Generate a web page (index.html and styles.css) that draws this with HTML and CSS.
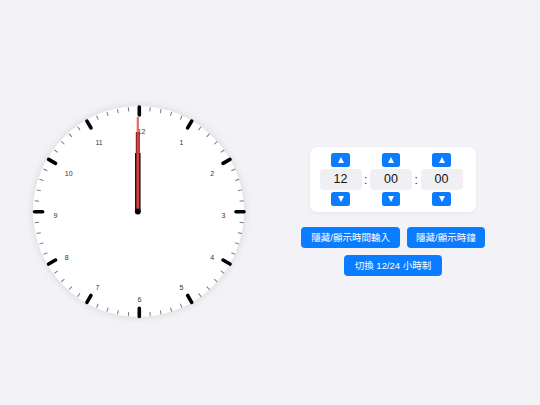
FILE: index.html
```html
<!DOCTYPE html>
<html lang="zh-Hant">
<head>
<meta charset="utf-8">
<title>時鐘</title>
<link rel="stylesheet" href="styles.css">
</head>
<body>
<main class="page">
  <div class="clock">
    <svg class="face" viewBox="0 0 211 211" width="211" height="211">
      <g class="minor">
        <line x1="106.3" y1="0.7" x2="106.3" y2="4.9" transform="rotate(6 106.3 105.7)"/>
        <line x1="106.3" y1="0.7" x2="106.3" y2="4.9" transform="rotate(12 106.3 105.7)"/>
        <line x1="106.3" y1="0.7" x2="106.3" y2="4.9" transform="rotate(18 106.3 105.7)"/>
        <line x1="106.3" y1="0.7" x2="106.3" y2="4.9" transform="rotate(24 106.3 105.7)"/>
        <line x1="106.3" y1="0.7" x2="106.3" y2="4.9" transform="rotate(36 106.3 105.7)"/>
        <line x1="106.3" y1="0.7" x2="106.3" y2="4.9" transform="rotate(42 106.3 105.7)"/>
        <line x1="106.3" y1="0.7" x2="106.3" y2="4.9" transform="rotate(48 106.3 105.7)"/>
        <line x1="106.3" y1="0.7" x2="106.3" y2="4.9" transform="rotate(54 106.3 105.7)"/>
        <line x1="106.3" y1="0.7" x2="106.3" y2="4.9" transform="rotate(66 106.3 105.7)"/>
        <line x1="106.3" y1="0.7" x2="106.3" y2="4.9" transform="rotate(72 106.3 105.7)"/>
        <line x1="106.3" y1="0.7" x2="106.3" y2="4.9" transform="rotate(78 106.3 105.7)"/>
        <line x1="106.3" y1="0.7" x2="106.3" y2="4.9" transform="rotate(84 106.3 105.7)"/>
        <line x1="106.3" y1="0.7" x2="106.3" y2="4.9" transform="rotate(96 106.3 105.7)"/>
        <line x1="106.3" y1="0.7" x2="106.3" y2="4.9" transform="rotate(102 106.3 105.7)"/>
        <line x1="106.3" y1="0.7" x2="106.3" y2="4.9" transform="rotate(108 106.3 105.7)"/>
        <line x1="106.3" y1="0.7" x2="106.3" y2="4.9" transform="rotate(114 106.3 105.7)"/>
        <line x1="106.3" y1="0.7" x2="106.3" y2="4.9" transform="rotate(126 106.3 105.7)"/>
        <line x1="106.3" y1="0.7" x2="106.3" y2="4.9" transform="rotate(132 106.3 105.7)"/>
        <line x1="106.3" y1="0.7" x2="106.3" y2="4.9" transform="rotate(138 106.3 105.7)"/>
        <line x1="106.3" y1="0.7" x2="106.3" y2="4.9" transform="rotate(144 106.3 105.7)"/>
        <line x1="106.3" y1="0.7" x2="106.3" y2="4.9" transform="rotate(156 106.3 105.7)"/>
        <line x1="106.3" y1="0.7" x2="106.3" y2="4.9" transform="rotate(162 106.3 105.7)"/>
        <line x1="106.3" y1="0.7" x2="106.3" y2="4.9" transform="rotate(168 106.3 105.7)"/>
        <line x1="106.3" y1="0.7" x2="106.3" y2="4.9" transform="rotate(174 106.3 105.7)"/>
        <line x1="106.3" y1="0.7" x2="106.3" y2="4.9" transform="rotate(186 106.3 105.7)"/>
        <line x1="106.3" y1="0.7" x2="106.3" y2="4.9" transform="rotate(192 106.3 105.7)"/>
        <line x1="106.3" y1="0.7" x2="106.3" y2="4.9" transform="rotate(198 106.3 105.7)"/>
        <line x1="106.3" y1="0.7" x2="106.3" y2="4.9" transform="rotate(204 106.3 105.7)"/>
        <line x1="106.3" y1="0.7" x2="106.3" y2="4.9" transform="rotate(216 106.3 105.7)"/>
        <line x1="106.3" y1="0.7" x2="106.3" y2="4.9" transform="rotate(222 106.3 105.7)"/>
        <line x1="106.3" y1="0.7" x2="106.3" y2="4.9" transform="rotate(228 106.3 105.7)"/>
        <line x1="106.3" y1="0.7" x2="106.3" y2="4.9" transform="rotate(234 106.3 105.7)"/>
        <line x1="106.3" y1="0.7" x2="106.3" y2="4.9" transform="rotate(246 106.3 105.7)"/>
        <line x1="106.3" y1="0.7" x2="106.3" y2="4.9" transform="rotate(252 106.3 105.7)"/>
        <line x1="106.3" y1="0.7" x2="106.3" y2="4.9" transform="rotate(258 106.3 105.7)"/>
        <line x1="106.3" y1="0.7" x2="106.3" y2="4.9" transform="rotate(264 106.3 105.7)"/>
        <line x1="106.3" y1="0.7" x2="106.3" y2="4.9" transform="rotate(276 106.3 105.7)"/>
        <line x1="106.3" y1="0.7" x2="106.3" y2="4.9" transform="rotate(282 106.3 105.7)"/>
        <line x1="106.3" y1="0.7" x2="106.3" y2="4.9" transform="rotate(288 106.3 105.7)"/>
        <line x1="106.3" y1="0.7" x2="106.3" y2="4.9" transform="rotate(294 106.3 105.7)"/>
        <line x1="106.3" y1="0.7" x2="106.3" y2="4.9" transform="rotate(306 106.3 105.7)"/>
        <line x1="106.3" y1="0.7" x2="106.3" y2="4.9" transform="rotate(312 106.3 105.7)"/>
        <line x1="106.3" y1="0.7" x2="106.3" y2="4.9" transform="rotate(318 106.3 105.7)"/>
        <line x1="106.3" y1="0.7" x2="106.3" y2="4.9" transform="rotate(324 106.3 105.7)"/>
        <line x1="106.3" y1="0.7" x2="106.3" y2="4.9" transform="rotate(336 106.3 105.7)"/>
        <line x1="106.3" y1="0.7" x2="106.3" y2="4.9" transform="rotate(342 106.3 105.7)"/>
        <line x1="106.3" y1="0.7" x2="106.3" y2="4.9" transform="rotate(348 106.3 105.7)"/>
        <line x1="106.3" y1="0.7" x2="106.3" y2="4.9" transform="rotate(354 106.3 105.7)"/>
      </g>
      <g class="major">
        <line x1="106.3" y1="1" x2="106.3" y2="9" transform="rotate(0 106.3 105.7)"/>
        <line x1="106.3" y1="1" x2="106.3" y2="9" transform="rotate(30 106.3 105.7)"/>
        <line x1="106.3" y1="1" x2="106.3" y2="9" transform="rotate(60 106.3 105.7)"/>
        <line x1="106.3" y1="1" x2="106.3" y2="9" transform="rotate(90 106.3 105.7)"/>
        <line x1="106.3" y1="1" x2="106.3" y2="9" transform="rotate(120 106.3 105.7)"/>
        <line x1="106.3" y1="1" x2="106.3" y2="9" transform="rotate(150 106.3 105.7)"/>
        <line x1="106.3" y1="1" x2="106.3" y2="9" transform="rotate(180 106.3 105.7)"/>
        <line x1="106.3" y1="1" x2="106.3" y2="9" transform="rotate(210 106.3 105.7)"/>
        <line x1="106.3" y1="1" x2="106.3" y2="9" transform="rotate(240 106.3 105.7)"/>
        <line x1="106.3" y1="1" x2="106.3" y2="9" transform="rotate(270 106.3 105.7)"/>
        <line x1="106.3" y1="1" x2="106.3" y2="9" transform="rotate(300 106.3 105.7)"/>
        <line x1="106.3" y1="1" x2="106.3" y2="9" transform="rotate(330 106.3 105.7)"/>
      </g>
      <g class="nums">
        <text x="146.5" y="38.8">1</text>
        <text x="177.2" y="69.5">2</text>
        <text x="188.5" y="111.5">3</text>
        <text x="177.2" y="153.5">4</text>
        <text x="146.5" y="184.2">5</text>
        <text x="104.5" y="195.5">6</text>
        <text x="62.5" y="184.2">7</text>
        <text x="31.8" y="153.5">8</text>
        <text x="20.5" y="111.5">9</text>
        <text x="31.8" y="69.5">10</text>
        <text x="62.5" y="38.8">11</text>
        <text x="104.5" y="27.5">12</text>
      </g>
      <line class="hand-hour" x1="104.8" y1="105.5" x2="104.8" y2="47"/>
      <line class="hand-minute" x1="104.8" y1="105.5" x2="104.8" y2="26"/>
      <line class="hand-second" x1="104.8" y1="105.5" x2="104.8" y2="11"/>
      <circle class="pivot" cx="104.8" cy="105.5" r="3"/>
    </svg>
  </div>

  <div class="panel">
    <div class="card">
      <div class="unit">
        <button class="step"><span class="tri-up"></span></button>
        <div class="field">12</div>
        <button class="step"><span class="tri-down"></span></button>
      </div>
      <span class="colon">:</span>
      <div class="unit">
        <button class="step"><span class="tri-up"></span></button>
        <div class="field">00</div>
        <button class="step"><span class="tri-down"></span></button>
      </div>
      <span class="colon">:</span>
      <div class="unit">
        <button class="step"><span class="tri-up"></span></button>
        <div class="field">00</div>
        <button class="step"><span class="tri-down"></span></button>
      </div>
    </div>
    <div class="actions">
      <div class="row">
        <button class="btn btn-wide">隱藏/顯示時間輸入</button>
        <button class="btn">隱藏/顯示時鐘</button>
      </div>
      <div class="row">
        <button class="btn btn-mode">切換 12/24 小時制</button>
      </div>
    </div>
  </div>
</main>
</body>
</html>
```

FILE: styles.css
```css
* { box-sizing: border-box; }

html, body {
  margin: 0;
  padding: 0;
  background: #f2f2f7;
  font-family: "Liberation Sans", "Noto Sans CJK TC", sans-serif;
}

.page {
  height: 405px;
  padding: 18px 0 0 33px;
  display: flex;
  align-items: center;
  gap: 57px;
}

.clock {
  width: 211px;
  height: 211px;
  border-radius: 50%;
  background: #ffffff;
  box-shadow: 0 0 8px rgba(0, 0, 0, 0.12);
  flex: none;
}

.face {
  display: block;
  overflow: visible;
}

.minor line {
  stroke: #7a7a7a;
  stroke-width: 1;
}

.major line {
  stroke: #000000;
  stroke-width: 3.6;
  stroke-linecap: round;
}

.nums text {
  font-family: "Liberation Sans", sans-serif;
  font-size: 7px;
  fill: #333333;
}

.hand-hour {
  stroke: #000000;
  stroke-width: 5.5;
}

.hand-minute {
  stroke: #7a1616;
  stroke-width: 4;
}

.hand-second {
  stroke: #e25050;
  stroke-opacity: 0.85;
  stroke-width: 2.2;
}

.pivot {
  fill: #000000;
}

.panel {
  width: 184px;
  display: flex;
  flex-direction: column;
  align-items: center;
  gap: 15px;
}

.card {
  width: 166px;
  background: #ffffff;
  border-radius: 7px;
  box-shadow: 0 1px 4px rgba(0, 0, 0, 0.06);
  padding: 6px 13px 6px 9.5px;
  display: flex;
  align-items: center;
}

.unit {
  width: 42px;
  display: flex;
  flex-direction: column;
  align-items: center;
  gap: 1.5px;
}

.step {
  width: 18.5px;
  height: 14.5px;
  border: none;
  border-radius: 2.5px;
  background: #0a7cff;
  padding: 0;
  display: flex;
  align-items: center;
  justify-content: center;
}

.tri-up {
  width: 0;
  height: 0;
  border-left: 3.5px solid transparent;
  border-right: 3.5px solid transparent;
  border-bottom: 6px solid #ffffff;
}

.tri-down {
  width: 0;
  height: 0;
  border-left: 3.5px solid transparent;
  border-right: 3.5px solid transparent;
  border-top: 6px solid #ffffff;
}

.field {
  width: 42px;
  height: 21.5px;
  border-radius: 4px;
  background: #f0f0f4;
  font-size: 12.5px;
  line-height: 21.5px;
  text-align: center;
  color: #111111;
}

.colon {
  width: 8.5px;
  text-align: center;
  font-size: 12px;
  color: #333333;
}

.actions {
  display: flex;
  flex-direction: column;
  align-items: center;
  gap: 7px;
}

.row {
  display: flex;
  gap: 7px;
}

.btn {
  height: 21px;
  border: none;
  border-radius: 4px;
  background: #0a7cff;
  color: #ffffff;
  font-family: "Liberation Sans", "Noto Sans CJK TC", sans-serif;
  font-size: 9.5px;
  line-height: 21px;
  padding: 0 9px;
  white-space: nowrap;
}

.btn-wide {
  padding: 0 10px;
}

.btn-mode {
  padding: 0 11px;
}
```
